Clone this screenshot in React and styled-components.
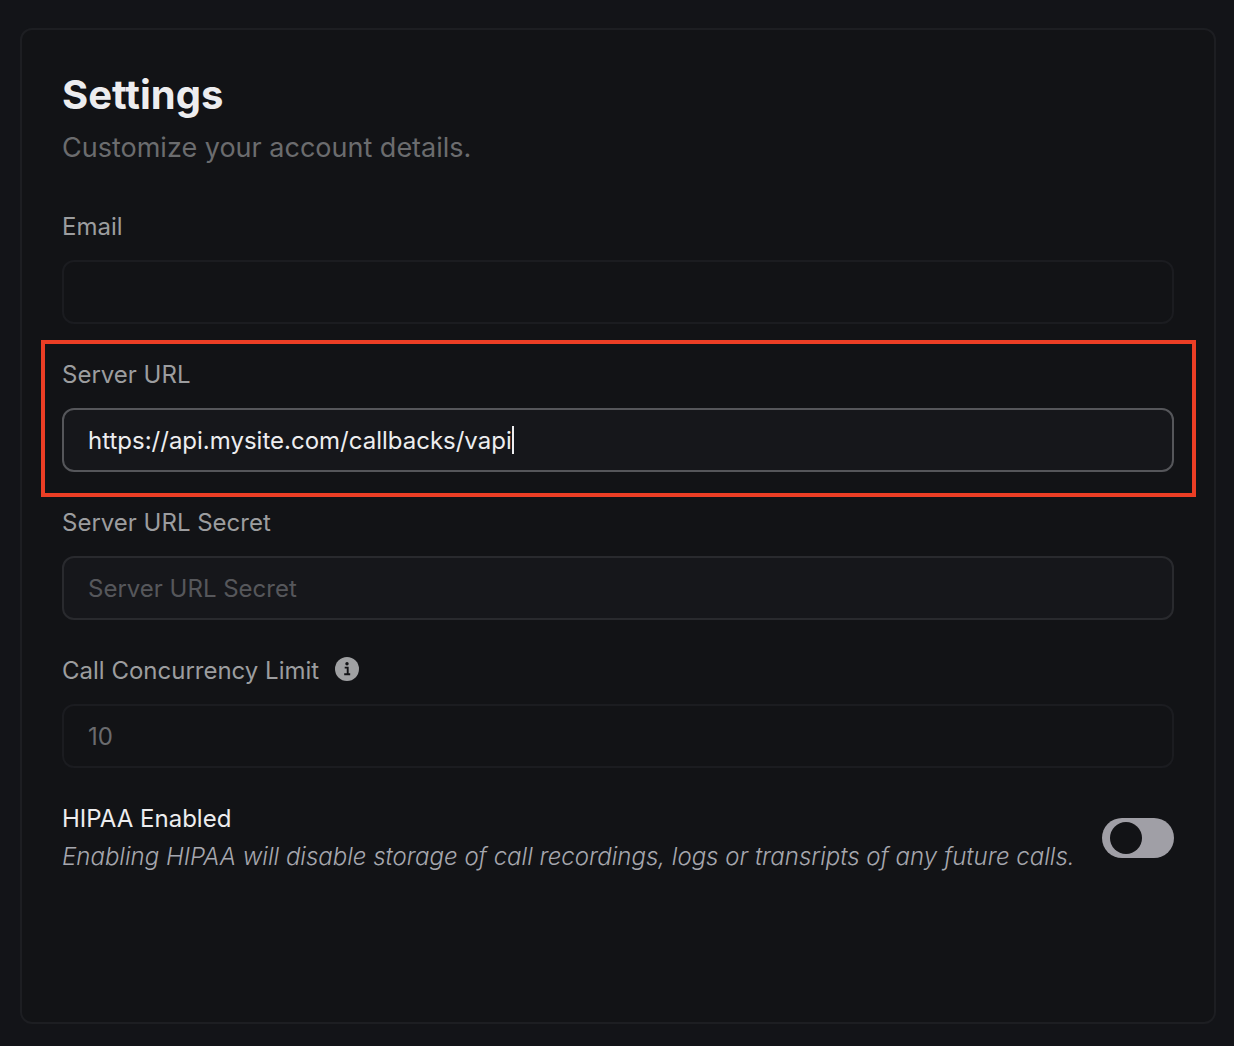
import React, { useState } from "react";
import styled, { createGlobalStyle } from "styled-components";

const GlobalStyle = createGlobalStyle`
  *, *::before, *::after { box-sizing: border-box; }
  html { background: #131418; }
  body {
    margin: 0;
    background: #131418;
    color: #ededef;
    font-family: Inter, "Liberation Sans", sans-serif;
    font-size: 24px;
    line-height: 34px;
  }
  input, button { font: inherit; color: inherit; }
`;

const Page = styled.main`
  display: flex;
  min-height: 100vh;
  padding: 28px 18px 22px 20px;
`;

const Card = styled.section`
  flex: 1;
  min-width: 0;
  padding: 40px;
  border: 2px solid #1d1e22;
  border-radius: 12px;
  background: #121316;
`;

const Header = styled.header`
  display: flex;
  flex-direction: column;
  gap: 6px;
  margin-bottom: 40px;
`;

const Title = styled.h1`
  margin: 0;
  font-size: 40px;
  line-height: 50px;
  font-weight: 700;
`;

const Subtitle = styled.p`
  margin: 0;
  font-size: 27px;
  line-height: 44px;
  color: #6b6c6e;
`;

const Form = styled.form`
  display: flex;
  flex-direction: column;
  gap: 34px;
`;

const Field = styled.div`
  position: relative;
  display: flex;
  flex-direction: column;
  gap: 16px;
`;

const Highlight = styled.span`
  position: absolute;
  inset: -18px -22px -25px -21px;
  border: 4px solid #eb3e25;
  pointer-events: none;
`;

const LabelRow = styled.div`
  display: flex;
  align-items: center;
  gap: 16px;
  color: #9c9d9f;
`;

const InfoButton = styled.button`
  display: flex;
  padding: 0 0 4px;
  border: 0;
  background: none;
`;

const boxColors = {
  idle: { border: "#292a2e", fill: "#16171b" },
  focused: { border: "#55565a", fill: "#16171b" },
  disabled: { border: "#1b1c20", fill: "#121316" },
};

const InputBox = styled.div`
  display: flex;
  align-items: center;
  height: 64px;
  padding: 0 24px;
  border: 2px solid ${({ $state }) => boxColors[$state].border};
  border-radius: 12px;
  background: ${({ $state }) => boxColors[$state].fill};
`;

const TextInput = styled.input`
  flex: ${({ $hug }) => ($hug ? "0 1 auto" : "1")};
  field-sizing: ${({ $hug }) => ($hug ? "content" : "fixed")};
  min-width: 0;
  padding: 2px 0 0;
  border: 0;
  outline: 0;
  background: transparent;
  caret-color: ${({ $hug }) => ($hug ? "transparent" : "auto")};

  &::placeholder {
    color: #56575b;
    opacity: 1;
  }

  &:disabled {
    color: #6a6b6e;
  }
`;

const Caret = styled.span`
  width: 2px;
  height: 28px;
  background: #ededef;
`;

const ToggleRow = styled.div`
  display: flex;
  align-items: center;
  justify-content: space-between;
  gap: 12px;
`;

const ToggleText = styled.div`
  display: flex;
  flex-direction: column;
  gap: 4px;
`;

const Hint = styled.em`
  font-weight: 300;
  color: #a6a7ae;
`;

const Switch = styled.input`
  appearance: none;
  flex: none;
  display: flex;
  align-items: center;
  width: 72px;
  height: 40px;
  margin: 0;
  padding: 0 8px;
  border-radius: 20px;
  background: #a09fa6;
  cursor: pointer;

  &::before {
    content: "";
    width: 32px;
    height: 32px;
    border-radius: 50%;
    background: #121316;
  }

  &:checked {
    justify-content: flex-end;
    background: #5dfeca;
  }
`;

function InfoIcon() {
  return (
    <svg width="24" height="24" viewBox="0 0 24 24" aria-hidden="true">
      <circle cx="12" cy="12" r="12" fill="#a0a1a3" />
      <circle cx="12" cy="6.7" r="1.7" fill="#121316" />
      <path
        d="M9.7 10.6h3v6.6M9.2 17.2h6"
        fill="none"
        stroke="#121316"
        strokeWidth="1.9"
      />
    </svg>
  );
}

function TextField({ id, label, state = "idle", highlighted, info, ...inputProps }) {
  const focused = state === "focused";
  return (
    <Field>
      <LabelRow>
        <label htmlFor={id}>{label}</label>
        {info && (
          <InfoButton type="button" aria-label={info}>
            <InfoIcon />
          </InfoButton>
        )}
      </LabelRow>
      <InputBox $state={state}>
        <TextInput id={id} $hug={focused} disabled={state === "disabled"} {...inputProps} />
        {focused && <Caret />}
      </InputBox>
      {highlighted && <Highlight />}
    </Field>
  );
}

export default function App() {
  const [serverUrl, setServerUrl] = useState("https://api.mysite.com/callbacks/vapi");
  const [hipaa, setHipaa] = useState(false);

  return (
    <>
      <GlobalStyle />
      <Page>
        <Card>
          <Header>
            <Title>Settings</Title>
            <Subtitle>Customize your account details.</Subtitle>
          </Header>
          <Form onSubmit={(e) => e.preventDefault()}>
            <TextField id="email" label="Email" type="email" state="disabled" />
            <TextField
              id="server-url"
              label="Server URL"
              state="focused"
              highlighted
              spellCheck={false}
              value={serverUrl}
              onChange={(e) => setServerUrl(e.target.value)}
            />
            <TextField id="server-secret" label="Server URL Secret" placeholder="Server URL Secret" />
            <TextField
              id="concurrency"
              label="Call Concurrency Limit"
              info="About the call concurrency limit"
              state="disabled"
              defaultValue="10"
            />
            <ToggleRow>
              <ToggleText>
                <label htmlFor="hipaa">HIPAA Enabled</label>
                <Hint id="hipaa-hint">
                  Enabling HIPAA will disable storage of call recordings, logs or transripts of any future calls.
                </Hint>
              </ToggleText>
              <Switch
                id="hipaa"
                type="checkbox"
                role="switch"
                aria-describedby="hipaa-hint"
                checked={hipaa}
                onChange={(e) => setHipaa(e.target.checked)}
              />
            </ToggleRow>
          </Form>
        </Card>
      </Page>
    </>
  );
}
